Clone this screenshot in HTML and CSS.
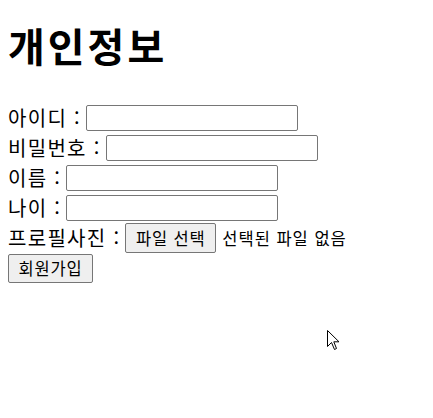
FILE: index.html
```html
<!DOCTYPE html>
<html lang="ko">
<head>
<meta charset="utf-8">
<title>개인정보</title>
<link rel="stylesheet" href="styles.css">
</head>
<body>
<h1 class="title">개인정보</h1>
<form class="form">
  <div class="row"><label class="label" for="uid">아이디 :</label><input class="field" id="uid" type="text"></div>
  <div class="row"><label class="label" for="pw">비밀번호 :</label><input class="field" id="pw" type="password"></div>
  <div class="row"><label class="label" for="nm">이름 :</label><input class="field" id="nm" type="text"></div>
  <div class="row"><label class="label" for="age">나이 :</label><input class="field" id="age" type="text"></div>
  <div class="row"><span class="label">프로필사진 :</span><span class="btn file-btn">파일 선택</span><span class="file-status">선택된 파일 없음</span></div>
  <div class="row"><button class="btn submit" type="button">회원가입</button></div>
</form>
<svg class="cursor" width="14" height="21" viewBox="0 0 14 21" aria-hidden="true">
  <path d="M0.5 0.5 L0.5 16.5 L4.5 12.5 L7.5 19.5 L9.5 18.5 L6.8 11.8 L12 11.8 Z" fill="#fff" stroke="#000" stroke-width="1" stroke-linejoin="miter"/>
</svg>
</body>
</html>
```
FILE: styles.css
```css
html, body {
  background: #fff;
}
body {
  margin: 8px;
  font-family: "Noto Sans CJK KR", "Noto Sans", sans-serif;
  font-size: 20px;
  color: #000;
  position: relative;
  min-height: 400px;
}
.title {
  font-size: 40px;
  font-weight: 700;
  line-height: 48px;
  letter-spacing: 3px;
  margin: 0;
  padding-top: 13px;
}
.form {
  margin-top: 34px;
}
.row {
  display: flex;
  align-items: center;
  height: 30px;
}
.label {
  letter-spacing: 1.3px;
  margin-right: 5px;
  line-height: 26px;
}
.field {
  box-sizing: border-box;
  width: 212px;
  height: 26px;
  border: 1px solid #767676;
  border-radius: 2px;
  background: #fff;
  margin: 0;
  padding: 1px 2px;
  font-size: 16px;
}
.btn {
  box-sizing: border-box;
  display: inline-flex;
  align-items: center;
  justify-content: center;
  height: 30px;
  padding: 0 6px;
  background: #efefef;
  border: 1px solid #767676;
  border-radius: 2px;
  font-family: "Noto Sans CJK KR", "Noto Sans", sans-serif;
  font-size: 16.5px;
  letter-spacing: 0.8px;
  color: #000;
  margin: 0;
}
.file-btn {
  width: 91px;
}
.file-status {
  font-size: 16.5px;
  letter-spacing: 1px;
  margin-left: 6px;
}
.submit {
  width: 85px;
  height: 29px;
}
.cursor {
  position: absolute;
  left: 319px;
  top: 322px;
}
```
